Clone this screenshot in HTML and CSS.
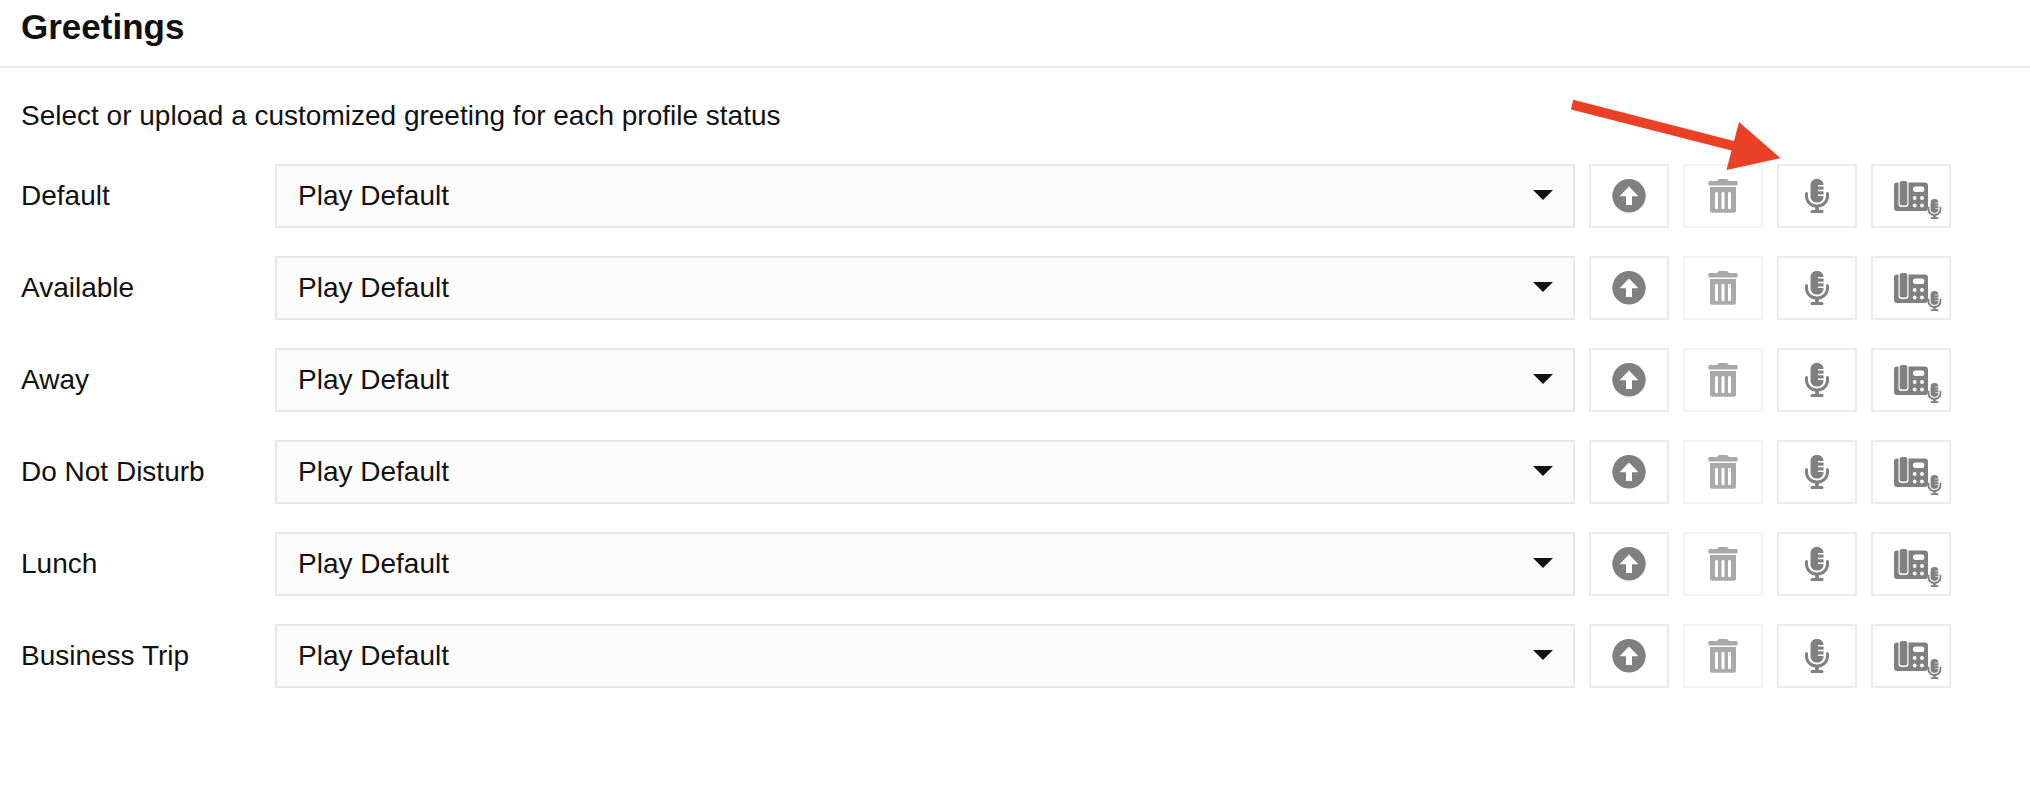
FILE: index.html
```html
<!DOCTYPE html>
<html lang="en">
<head>
<meta charset="utf-8">
<title>Greetings</title>
<link rel="stylesheet" href="styles.css">
</head>
<body>
<svg class="sprite" aria-hidden="true">
  <symbol id="upload" viewBox="0 0 76 60">
    <circle cx="38" cy="29.8" r="16.7"/>
    <path class="cut" d="M38 20.5 47 29.7V30.3H41V39H35V30.3H29V29.7Z"/>
  </symbol>
  <symbol id="trash" viewBox="0 0 76 60">
    <path d="M24.8 15H32L34 13H42L44 15H51.200Q52.700 15 52.700 16.400V18.200Q52.700 19.500 51.200 19.500H24.800Q23.300 19.500 23.300 18.200V16.400Q23.300 15 24.800 15Z"/>
    <path fill-rule="evenodd" d="M25 21H51V44.500Q51 46.700 48.800 46.700H27.200Q25 46.700 25 44.500ZM31.500 25.700Q30 25.700 30 27.200V41.800Q30 43.300 31.500 43.300T33 41.800V27.200Q33 25.700 31.500 25.700ZM38 25.700Q36.500 25.700 36.500 27.200V41.800Q36.500 43.300 38 43.300T39.500 41.800V27.200Q39.500 25.700 38 25.700ZM44.500 25.700Q43 25.700 43 27.200V41.800Q43 43.300 44.500 43.300T46 41.800V27.200Q46 25.700 44.500 25.700Z"/>
  </symbol>
  <symbol id="mic" viewBox="0 0 24 34">
    <path d="M12 0C16 0 18.500 2.500 18.500 6H13V7.400H18.500V10.800H13V12.200H18.500V15.500H13V16.900H18.500C18.500 21 16 23.500 12 23.500S5.500 21 5.500 17V6.500C5.500 2.500 8 0 12 0Z"/>
    <path d="M0 14.500Q0 13 1.500 13T3 14.500V16.500C3 22 6.500 25.500 12 25.500S21 22 21 16.500V14.500Q21 13 22.500 13T24 14.500V16.500C24 23.500 19.500 27.800 13.900 28.400V31H17.200Q18.500 31 18.500 32.500T17.200 34H6.800Q5.500 34 5.500 32.500T6.800 31H10.100V28.400C4.500 27.800 0 23.500 0 16.500Z"/>
  </symbol>
  <symbol id="phone" viewBox="0 0 34 30">
    <path fill-rule="evenodd" d="M3 1.500H4.500V23Q4.500 26 7.500 26H11.500Q14.500 26 14.500 23V1.500H31Q34 1.500 34 4.500V27Q34 30 31 30H3Q0 30 0 27V4.500Q0 1.500 3 1.500ZM21.500 5.500Q19 5.500 19 8.200T21.500 11H28Q30.300 11 30.300 8.200T28 5.500Z"/>
    <rect x="5.700" y="0" width="7.600" height="24.500" rx="2"/>
    <g class="cut"><circle cx="20.700" cy="17" r="1.900"/><circle cx="28" cy="17" r="1.900"/><circle cx="20.700" cy="24.500" r="1.900"/><circle cx="28" cy="24.500" r="1.900"/></g>
  </symbol>
</svg>
<header class="header"><h1 class="title">Greetings</h1></header>
<main class="content">
  <p class="intro">Select or upload a customized greeting for each profile status</p>
  <div class="rows" id="rows"></div>
</main>
<svg class="pointer" viewBox="0 0 212 74" aria-hidden="true"><path d="M3.200 1.800 164 43 169 24 210.500 60.200 156.500 72 161.500 52.500 1 11.500Z"/></svg>
<script src="rows.js"></script>
</body>
</html>
```
FILE: styles.css
```css
* { box-sizing: border-box; }
body {
  margin: 0;
  background: #fff;
  color: #111;
  font: 28px/32px "Liberation Sans", Arial, sans-serif;
}
.sprite { position: absolute; width: 0; height: 0; }
.header {
  height: 68px;
  padding: 7px 21px 0;
  border-bottom: 2px solid #ebebeb;
}
.title { margin: 0; font-size: 35px; line-height: 40px; font-weight: 700; }
.content { padding: 32px 0 0 21px; }
.intro { margin: 0 0 32px; }
.rows { display: grid; gap: 28px; }
.row {
  display: grid;
  grid-template-columns: 254px 1300px repeat(4, 94px);
  height: 64px;
}
.label { line-height: 63px; }
.select {
  display: flex;
  align-items: center;
  justify-content: space-between;
  padding: 0 20px 0 21px;
  border: 2px solid #e6e6e6;
  background: #fcfcfc;
  color: inherit;
  font: inherit;
}
.caret { width: 20px; height: 10px; margin-bottom: 2px; fill: #111; }
.button {
  margin: 0 0 0 14px;
  padding: 0;
  border: 2px solid #ebebeb;
  background: #fff;
}
.icon { display: block; width: 76px; height: 60px; fill: #808080; }
.small-mic { stroke: #808080; stroke-width: .5px; }
.cut { fill: #fff; }
.disabled { border-color: #f3f3f3; }
.disabled .icon { fill: #a9a9a9; }
.pointer {
  position: absolute;
  left: 1570px;
  top: 98px;
  width: 212px;
  height: 74px;
  fill: #ea4025;
}
```
FILE: rows.js
```js
const labels = ["Default", "Available", "Away", "Do Not Disturb", "Lunch", "Business Trip"];
document.getElementById("rows").innerHTML = labels.map(label => `
  <div class="row">
    <span class="label">${label}</span>
    <button class="select">Play Default<svg class="caret" viewBox="0 0 20 10"><path d="M0 0H20L10 10Z"/></svg></button>
    <button class="button" aria-label="Upload"><svg class="icon"><use href="#upload"/></svg></button>
    <button class="button disabled" aria-label="Delete"><svg class="icon"><use href="#trash"/></svg></button>
    <button class="button" aria-label="Record"><svg class="icon"><use href="#mic" x="26" y="13" width="24" height="34"/></svg></button>
    <button class="button" aria-label="Record by phone"><svg class="icon"><use href="#phone" x="21" y="15" width="34" height="30"/><use class="small-mic" href="#mic" x="54.5" y="33" width="14" height="20"/></svg></button>
  </div>`).join("");
```
